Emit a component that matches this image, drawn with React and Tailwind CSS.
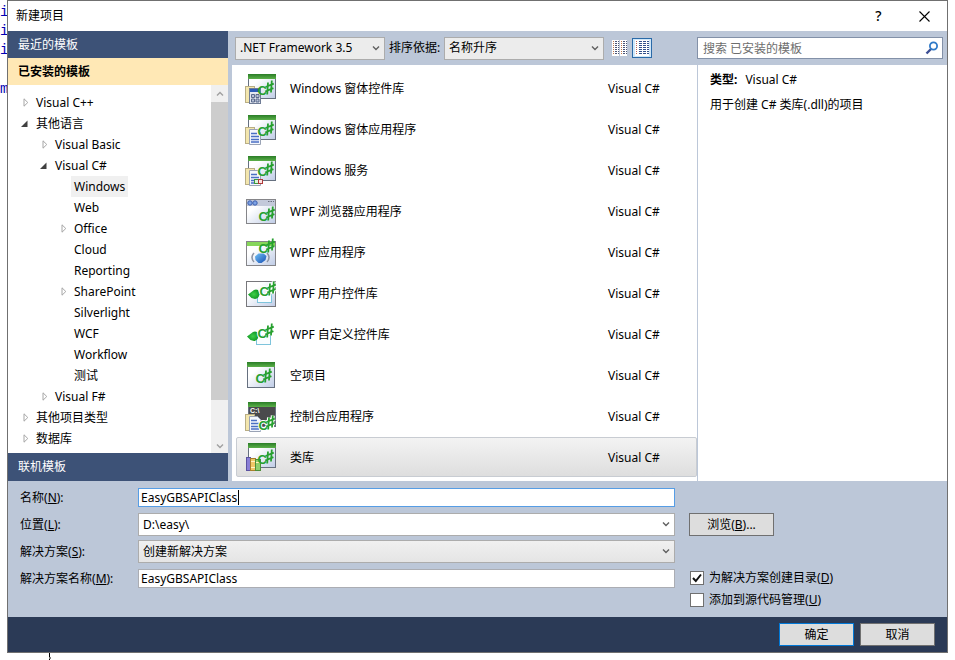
import React, { useState } from 'react';

const TREE = [
    { label: 'Visual C++', level: 0, arrow: 'closed' },
    { label: '其他语言', level: 0, arrow: 'open' },
    { label: 'Visual Basic', level: 1, arrow: 'closed' },
    { label: 'Visual C#', level: 1, arrow: 'open' },
    { label: 'Windows', level: 2 },
    { label: 'Web', level: 2 },
    { label: 'Office', level: 2, arrow: 'closed' },
    { label: 'Cloud', level: 2 },
    { label: 'Reporting', level: 2 },
    { label: 'SharePoint', level: 2, arrow: 'closed' },
    { label: 'Silverlight', level: 2 },
    { label: 'WCF', level: 2 },
    { label: 'Workflow', level: 2 },
    { label: '测试', level: 2 },
    { label: 'Visual F#', level: 1, arrow: 'closed' },
    { label: '其他项目类型', level: 0, arrow: 'closed' },
    { label: '数据库', level: 0, arrow: 'closed' },
];

const INDENT = ['pl-[9px]', 'pl-[28px]', 'pl-[47px]'];

const TEMPLATES = [
    { name: 'Windows 窗体控件库', icon: 'controls' },
    { name: 'Windows 窗体应用程序', icon: 'forms' },
    { name: 'Windows 服务', icon: 'service' },
    { name: 'WPF 浏览器应用程序', icon: 'browser' },
    { name: 'WPF 应用程序', icon: 'wpf' },
    { name: 'WPF 用户控件库', icon: 'userControl' },
    { name: 'WPF 自定义控件库', icon: 'customControl' },
    { name: '空项目', icon: 'empty' },
    { name: '控制台应用程序', icon: 'console' },
    { name: '类库', icon: 'library' },
];

function Sharp({ x, y, halo = false }) {
    const lines = 'M8 2.5 L7.2 14.5 M11.8 0.5 L11 12.5 M5.5 7 L13.8 3.6 M5.2 11.5 L13.4 8.1';
    return (
        <g transform={`translate(${x} ${y})`}>
            {halo && <path d={lines} stroke="#fff" strokeWidth="4" fill="none" />}
            <text
                x="-2.5"
                y="14.5"
                fontFamily="Liberation Sans, sans-serif"
                fontSize="13"
                fontWeight="bold"
                fill="#27a02f"
                stroke={halo ? '#fff' : 'none'}
                strokeWidth="2"
                paintOrder="stroke"
            >
                C
            </text>
            <path d={lines} stroke="#27a02f" strokeWidth="1.8" fill="none" />
        </g>
    );
}

function GreenWindow({ x = 3, y = 1, w = 28, h = 25, dark = false }) {
    return (
        <g>
            <rect x={x + 0.5} y={y + 0.5} width={w - 1} height={h - 1} fill={dark ? '#4a4a4c' : 'url(#pane)'} stroke="#66707f" />
            <rect x={x} y={y} width={w} height="5" fill="url(#greenBar)" />
        </g>
    );
}

function Pages({ lines = true }) {
    return (
        <g>
            <rect x="0.5" y="13.5" width="9" height="16" fill="#f3e6ae" stroke="#b9ae85" />
            <path d="M4.500 15.500h8l3 3v12h-11z" fill="#f4f7fd" stroke="#9aa3b5" />
            {lines && <path d="M6 19.500h6M6 22.500h8M6 25.500h8M6 28h8" stroke="#4a6fc4" strokeWidth="1.300" />}
        </g>
    );
}

function GreenBlob({ x, y }) {
    return (
        <g transform={`translate(${x} ${y})`}>
            <path d="M0 5.500 L4 2.500 Q7 -0.500 10 1 L11.500 5 Q11 9.500 7 10 L3.500 9 Z" fill="url(#blob)" />
        </g>
    );
}

function TemplateIcon({ kind }) {
    return (
        <svg viewBox="0 0 32 32" className="size-8 shrink-0" aria-hidden="true">
            {kind === 'controls' && (
                <>
                    <GreenWindow />
                    <Pages lines={false} />
                    <rect x="4.500" y="15.500" width="11" height="15" fill="#e4e8f0" stroke="#6f7c96" />
                    <rect x="5" y="16" width="10" height="3" fill="#2c5cb8" />
                    <path d="M6.500 21.500h3v3h-3zM11 21.500h3v3h-3zM6.500 26h3v3h-3zM11 26h3v3h-3z" fill="#b9c3d8" stroke="#5b6a8c" />
                    <Sharp x={15} y={7} />
                </>
            )}
            {kind === 'forms' && (
                <>
                    <GreenWindow />
                    <Pages />
                    <Sharp x={15} y={7} />
                </>
            )}
            {kind === 'service' && (
                <>
                    <GreenWindow />
                    <Pages />
                    <rect x="9.500" y="24.500" width="4" height="4" fill="#dff3dc" stroke="#3c9b42" />
                    <rect x="13.500" y="24.500" width="4" height="4" fill="#fbe3e3" stroke="#b03a3a" />
                    <Sharp x={15} y={6} />
                </>
            )}
            {kind === 'browser' && (
                <>
                    <rect x="1.500" y="3.500" width="29" height="24" fill="url(#pane)" stroke="#858589" />
                    <rect x="2" y="4" width="28" height="6" fill="#c3c9da" />
                    <circle cx="5" cy="7" r="2.200" fill="#7da2e4" stroke="#3d5fae" />
                    <circle cx="10" cy="7" r="2.200" fill="#7da2e4" stroke="#3d5fae" />
                    <path d="M23 5.500h6" stroke="#6c7180" strokeDasharray="1.500 1" />
                    <Sharp x={16} y={10} />
                </>
            )}
            {kind === 'wpf' && (
                <>
                    <rect x="1.500" y="4.500" width="29" height="24" fill="url(#pane)" stroke="#858589" />
                    <rect x="2" y="5" width="28" height="4" fill="#86d65a" />
                    <path d="M9 16q-4 4.500 0 9M22 16q4 4.500 0 9" stroke="#8d94a3" strokeWidth="1.500" fill="none" />
                    <path d="M10 19.500l3.500-3h5l3 2.500-1 4-4 3h-3l-3-3z" fill="url(#gem)" />
                    <Sharp x={16} y={1} />
                </>
            )}
            {kind === 'userControl' && (
                <>
                    <rect x="1.500" y="3.500" width="29" height="25" fill="url(#pane)" stroke="#77777b" />
                    <rect x="12.500" y="16.500" width="14" height="8" fill="#fafdff" stroke="#7ec4dc" />
                    <GreenBlob x={3} y={11} />
                    <Sharp x={17} y={3} halo />
                </>
            )}
            {kind === 'customControl' && (
                <>
                    <rect x="11.500" y="16.500" width="14" height="9" fill="#fafdff" stroke="#7ec4dc" />
                    <GreenBlob x={2} y={12} />
                    <Sharp x={15} y={4} halo />
                </>
            )}
            {kind === 'empty' && (
                <>
                    <GreenWindow x={2} y={2} w={28} h={26} />
                    <Sharp x={13} y={8} />
                </>
            )}
            {kind === 'console' && (
                <>
                    <GreenWindow dark />
                    <text x="5" y="12" fontFamily="Liberation Sans, sans-serif" fontSize="7" fontWeight="bold" fill="#fff">
                        C:\
                    </text>
                    <Pages />
                    <Sharp x={16} y={14} halo />
                </>
            )}
            {kind === 'library' && (
                <>
                    <GreenWindow />
                    <rect x="1.500" y="15.500" width="4" height="13" fill="#8a7fd6" stroke="#5b52a0" />
                    <rect x="5.500" y="16.500" width="5" height="12" fill="#f0c767" stroke="#a87f2c" />
                    <rect x="10.500" y="17.500" width="5" height="11" fill="#8fcf6c" stroke="#4d8f39" />
                    <path d="M6 19.500h4M6 25.500h4M11 20.500h4" stroke="#fff3c4" />
                    <Sharp x={15} y={7} />
                </>
            )}
        </svg>
    );
}

// gradients shared by all the template icons
function IconDefs() {
    return (
        <svg className="absolute size-0" aria-hidden="true">
            <defs>
                <linearGradient id="greenBar" x1="0" x2="0" y1="0" y2="1">
                    <stop offset="0" stopColor="#2a7d27" />
                    <stop offset="1" stopColor="#5cb04a" />
                </linearGradient>
                <linearGradient id="pane" x1="0" x2="1" y1="0" y2="1">
                    <stop offset="0.3" stopColor="#ffffff" />
                    <stop offset="1" stopColor="#bfcce6" />
                </linearGradient>
                <radialGradient id="blob">
                    <stop offset="0" stopColor="#3fd04a" />
                    <stop offset="1" stopColor="#149a25" />
                </radialGradient>
                <linearGradient id="gem" x1="0" x2="1" y1="0" y2="1">
                    <stop offset="0" stopColor="#6fc0f5" />
                    <stop offset="1" stopColor="#1750b5" />
                </linearGradient>
            </defs>
        </svg>
    );
}

function Chevron({ className = '', up = false }) {
    return (
        <svg viewBox="0 0 8 6" className={`h-1.5 w-2 ${className}`} fill="none" stroke="currentColor" strokeWidth="1.4" aria-hidden="true">
            <path d={up ? 'M1 4.500 L4 1.500 L7 4.500' : 'M1 1.500 L4 4.500 L7 1.500'} />
        </svg>
    );
}

function Select({ id, label, value, className, boxClass }) {
    return (
        <div className={`relative ${className}`}>
            <select
                id={id}
                aria-label={label}
                className={`block h-[23px] w-full appearance-none border border-[#acacac] pl-1 pr-5 outline-none ${boxClass}`}
            >
                <option>{value}</option>
            </select>
            <Chevron className="pointer-events-none absolute right-[5px] top-2 text-[#606060]" />
        </div>
    );
}

function TreeArrow({ state }) {
    return (
        <span className="flex w-4 shrink-0 items-center justify-center">
            {state === 'closed' && (
                <svg viewBox="0 0 6 9" className="ml-0.5 h-[9px] w-1.5" fill="#fff" stroke="#a6a6a6">
                    <path d="M1 0.800 L4.800 4.500 L1 8.200 Z" />
                </svg>
            )}
            {state === 'open' && (
                <svg viewBox="0 0 8 8" className="mr-0.5 size-2" fill="#404040">
                    <path d="M7.500 0.500 V7 H1 Z" />
                </svg>
            )}
        </span>
    );
}

function Sidebar() {
    const [selected, setSelected] = useState('Windows');

    return (
        <aside className="flex w-[220px] shrink-0 flex-col bg-white">
            <button className="h-[27px] bg-[#3d5277] px-2.5 text-left text-white">最近的模板</button>
            <button className="h-[27px] bg-[#ffe8b5] px-2.5 text-left font-bold">已安装的模板</button>
            <div className="flex flex-1">
                <ul className="flex-1 pb-1 pt-[7px]">
                    {TREE.map((node) => (
                        <li key={node.label} className={`flex h-[21px] ${INDENT[node.level]}`}>
                            <TreeArrow state={node.arrow} />
                            <button
                                onClick={() => setSelected(node.label)}
                                className={`px-[3px] ${selected === node.label ? 'bg-[#f0f0f0]' : ''}`}
                            >
                                {node.label}
                            </button>
                        </li>
                    ))}
                </ul>
                <div className="flex w-[17px] flex-col items-center bg-[#f0f0f0] text-[#a0a0a0]">
                    <div className="flex h-[17px] items-center">
                        <Chevron up />
                    </div>
                    <div className="w-full flex-1 bg-[#cdcdcd]" />
                    <div className="flex h-[53px] items-end pb-1">
                        <Chevron />
                    </div>
                </div>
            </div>
            <button className="h-7 bg-[#3d5277] px-2.5 text-left text-white">联机模板</button>
        </aside>
    );
}

function SmallIconsView() {
    return (
        <svg viewBox="0 0 16 16" className="h-4 w-4" aria-hidden="true">
            <path d="M0 0h7v16h-7zM8 0h7v16h-7z" fill="#fff" />
            <path d="M1.500 1v14M9.500 1v14" stroke="#c0784c" strokeDasharray="1 1" />
            <path
                d="M3 1.500h4M3 3.500h4M3 5.500h4M3 7.500h4M3 9.500h4M3 11.500h4M3 13.500h4M11 1.500h4M11 3.500h4M11 5.500h4M11 7.500h4M11 9.500h4M11 11.500h4M11 13.500h4"
                stroke="#4a5578"
                strokeDasharray="2 1"
            />
        </svg>
    );
}

function MediumIconsView() {
    return (
        <svg viewBox="0 0 16 16" className="h-4 w-4" aria-hidden="true">
            <path d="M1 0h14v16H1z" fill="#fff" />
            <path d="M2.500 1v14" stroke="#c0695c" strokeDasharray="1 1" />
            <path
                d="M5 1.500h10M5 3.500h10M5 5.500h10M5 7.500h10M5 9.500h10M5 11.500h10M5 13.500h10"
                stroke="#34518c"
                strokeDasharray="3 1"
            />
        </svg>
    );
}

function Toolbar() {
    return (
        <div className="flex h-[34px] items-center pr-1">
            <div className="flex w-[465px] items-center pl-[3px]">
                <Select label="框架版本" value=".NET Framework 3.5" className="w-[150px]" boxClass="bg-[#ececec]" />
                <label htmlFor="sort" className="w-[59px] whitespace-nowrap pl-1">
                    排序依据:
                </label>
                <Select id="sort" value="名称升序" className="w-[160px]" boxClass="bg-[#ececec]" />
                <button aria-label="小图标" className="ml-1.5 mr-0.5 flex size-5 items-center justify-center">
                    <SmallIconsView />
                </button>
                <button aria-label="中等图标" className="flex size-5 items-center justify-center border border-[#2a6aa8] bg-[#cfe6f8]">
                    <MediumIconsView />
                </button>
            </div>
            <div className="relative flex-1">
                <input
                    type="search"
                    aria-label="搜索"
                    placeholder="搜索 已安装的模板"
                    className="block h-[22px] w-full appearance-none border border-[#8391a8] bg-white pl-[5px] pr-6 outline-none placeholder:text-[#6d6d6d]"
                />
                <svg viewBox="0 0 14 14" className="pointer-events-none absolute right-1 top-1 size-3.5" fill="none" aria-hidden="true">
                    <path d="M6 8 L1.500 12.500" stroke="#3d4f94" strokeWidth="2.400" />
                    <circle cx="8.500" cy="5" r="3.600" stroke="#2f7ac8" strokeWidth="1.800" />
                </svg>
            </div>
        </div>
    );
}

function TemplateList() {
    const [selected, setSelected] = useState('类库');

    return (
        <ul className="w-[466px] border-r border-[#bcc7d8] bg-white pl-1 pt-[3px]">
            {TEMPLATES.map(({ name, icon }) => (
                <li key={name} className="h-[41px]">
                    <button
                        onClick={() => setSelected(name)}
                        className={`flex h-10 w-full items-center rounded-xs border pl-2 pt-0.5 text-left ${
                            selected === name
                                ? 'border-[#c8ccd2] bg-linear-to-b from-[#f3f3f3] to-[#dedede]'
                                : 'border-transparent'
                        }`}
                    >
                        <TemplateIcon kind={icon} />
                        <span className="flex-1 pl-[13px]">{name}</span>
                        <span className="w-[88px]">Visual C#</span>
                    </button>
                </li>
            ))}
        </ul>
    );
}

function FieldLabel({ htmlFor, text, hotkey }) {
    return (
        <label htmlFor={htmlFor} className="w-[118px] shrink-0">
            {text}(<u>{hotkey}</u>):
        </label>
    );
}

function CheckOption({ text, hotkey, defaultChecked }) {
    return (
        <label className="flex h-[22px] items-center gap-[5px]">
            <span className="relative size-3.5">
                <input
                    type="checkbox"
                    defaultChecked={defaultChecked}
                    className="peer block size-3.5 appearance-none border border-[#707070] bg-white"
                />
                <svg viewBox="0 0 14 14" className="pointer-events-none absolute inset-0 hidden size-3.5 peer-checked:block" fill="none" stroke="#111" strokeWidth="2">
                    <path d="M3 7 L5.800 10 L11 3.500" />
                </svg>
            </span>
            <span>
                {text}(<u>{hotkey}</u>)
            </span>
        </label>
    );
}

function ProjectForm() {
    const [name, setName] = useState('EasyGBSAPIClass');
    const [solution, setSolution] = useState('EasyGBSAPIClass');

    return (
        <form className="flex h-[136px] gap-[14px] pl-3 pt-[3px]">
            <div className="w-[655px]">
                <div className="flex h-[27px] items-center">
                    <FieldLabel htmlFor="name" text="名称" hotkey="N" />
                    <div className="relative flex-1">
                        <input
                            id="name"
                            value={name}
                            onChange={(e) => setName(e.target.value)}
                            className="block h-[19px] w-full border border-[#569de5] bg-white px-0.5 caret-transparent outline-none"
                        />
                        <span className="absolute left-[100px] top-0.5 h-[15px] w-px bg-black" />
                    </div>
                </div>
                <div className="flex h-[27px] items-center">
                    <FieldLabel htmlFor="location" text="位置" hotkey="L" />
                    <Select id="location" value="D:\easy\" className="flex-1" boxClass="bg-white" />
                </div>
                <div className="flex h-[27px] items-center">
                    <FieldLabel htmlFor="solution" text="解决方案" hotkey="S" />
                    <Select id="solution" value="创建新解决方案" className="flex-1" boxClass="bg-linear-to-b from-[#f0f0f0] to-[#e5e5e5]" />
                </div>
                <div className="flex h-[27px] items-center">
                    <FieldLabel htmlFor="solutionName" text="解决方案名称" hotkey="M" />
                    <input
                        id="solutionName"
                        value={solution}
                        onChange={(e) => setSolution(e.target.value)}
                        className="h-[19px] flex-1 border border-[#abadb3] bg-white px-0.5 outline-none"
                    />
                </div>
            </div>
            <div className="pt-[29px]">
                <button type="button" className="h-[23px] w-[85px] border border-[#707070] bg-[#dddddd]">
                    浏览(<u>B</u>)...
                </button>
                <div className="pl-px pt-[31px]">
                    <CheckOption text="为解决方案创建目录" hotkey="D" defaultChecked />
                    <CheckOption text="添加到源代码管理" hotkey="U" />
                </div>
            </div>
        </form>
    );
}

function Dialog() {
    return (
        <div className="flex flex-1 flex-col border border-[#707070] bg-[#bcc7d8]">
            <header className="flex h-[30px] items-center bg-white pl-2">
                <h1 className="flex-1">新建项目</h1>
                <button aria-label="帮助" className="w-[45px] text-sm font-medium">
                    ?
                </button>
                <button aria-label="关闭" className="flex w-[46px] justify-center">
                    <svg viewBox="0 0 11 11" className="size-[11px]" stroke="#000" strokeWidth="1.100" aria-hidden="true">
                        <path d="M0.500 0.500 L10.500 10.500 M10.500 0.500 L0.500 10.500" />
                    </svg>
                </button>
            </header>
            <main className="flex">
                <Sidebar />
                <div className="ml-1 flex flex-1 flex-col">
                    <Toolbar />
                    <div className="flex flex-1">
                        <TemplateList />
                        <section className="flex-1 bg-white px-3 pt-1.5">
                            <p className="leading-[18px]">
                                <b className="mr-2">类型:</b>Visual C#
                            </p>
                            <p className="mt-[7px] leading-[18px]">用于创建 C# 类库(.dll)的项目</p>
                        </section>
                    </div>
                </div>
            </main>
            <ProjectForm />
            <footer className="flex h-[35px] items-center justify-end gap-1.5 bg-[#2b3a56] pr-3">
                <button className="h-[23px] w-[75px] border border-[#0078d7] bg-[#dddddd]">确定</button>
                <button className="h-[23px] w-[75px] border border-[#707070] bg-[#dddddd]">取消</button>
            </footer>
        </div>
    );
}

export default function App() {
    return (
        <div className="min-h-screen bg-white font-['Noto_Sans','Noto_Sans_CJK_SC',sans-serif] text-[12px] leading-4 text-black">
            <IconDefs />
            <div className="flex pr-[7px]">
                {/* editor text that shows beside the dialog */}
                <div className="w-[7px] shrink-0 overflow-hidden pt-[3px] font-['Liberation_Mono'] text-[14px] leading-[19px] text-[#0000b4]">
                    <p>i</p>
                    <p>i</p>
                    <p>i</p>
                    <p className="pt-5">m</p>
                </div>
                <Dialog />
            </div>
            <div className="h-[7px] overflow-hidden pl-12">
                <svg viewBox="0 0 4 7" className="h-[7px] w-1" fill="none" stroke="#000">
                    <path d="M1.500 0 V4 L2.500 5 L1.500 6 V7" />
                </svg>
            </div>
        </div>
    );
}
